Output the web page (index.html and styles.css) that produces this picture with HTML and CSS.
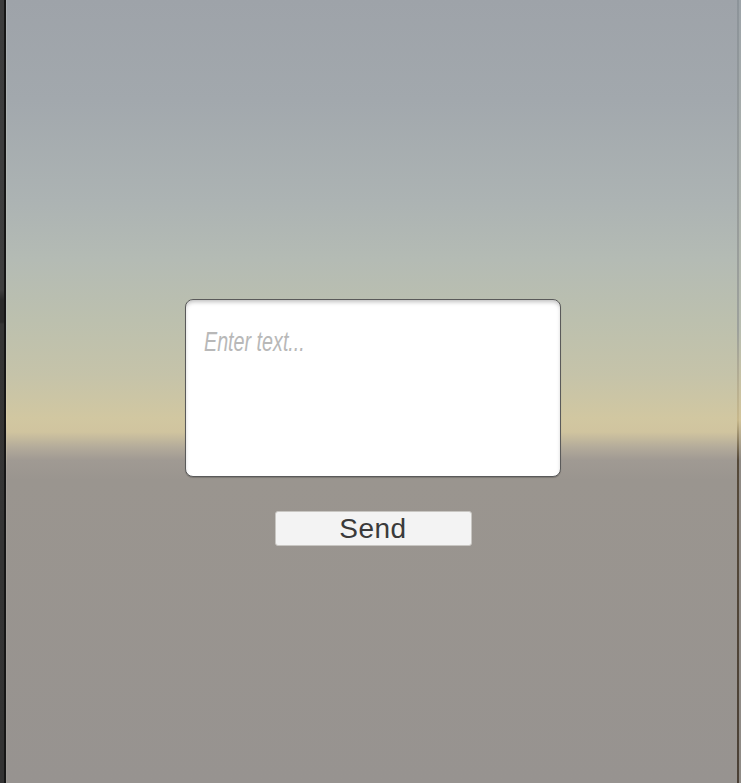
FILE: index.html
```html
<!DOCTYPE html>
<html>
<head>
<meta charset="utf-8">
<link rel="stylesheet" href="styles.css">
</head>
<body>
<div class="frame">
  <div class="side-left"><div class="dark"></div><div class="line"></div><div class="hi"></div></div>
  <main class="scene">
    <div class="textbox"><span class="placeholder">Enter text...</span></div>
    <button class="send">Send</button>
  </main>
  <div class="side-right"><div class="rline"></div><div class="redge"></div></div>
</div>
</body>
</html>
```
FILE: styles.css
```css
html, body { margin: 0; padding: 0; height: 100%; overflow: hidden; }
body { font-family: "Liberation Sans", Arial, sans-serif; }
.frame { display: flex; height: 783px; width: 741px; }
.side-left { display: flex; width: 7px; }
.side-left .dark { width: 4px; background: linear-gradient(to bottom, #3c3c3c 0, #3e3e3e 290px, #2a2a2a 300px, #2a2a2a 322px, #353535 324px, #333 783px); }
.side-left .line { width: 2px; background: #161616; }
.side-left .hi { width: 1px; background: linear-gradient(to bottom, #a9aeb2 0, #bcc2b8 330px, #d8cca6 420px, #a29d97 470px, #9b9894 783px); }
.scene {
  flex: 1;
  display: flex; flex-direction: column; align-items: center;
  padding-top: 299px; padding-left: 2px; box-sizing: border-box;
  background: linear-gradient(to bottom,
    #9ea3a9 0px, #a2a8ad 100px, #acb3b3 200px, #b4bbb4 260px,
    #bcc0ae 320px, #c5c3a9 375px, #d1c7a1 418px, #d0c49f 432px,
    #b2aa9a 448px, #a09a93 460px, #9a958f 480px, #979390 783px);
}
.side-right { display: flex; width: 4px; }
.side-right .rline { width: 2px; background: linear-gradient(to bottom, #8d949a 0, #9da19b 330px, #c7b88c 420px, #55493a 460px, #4a4036 783px); }
.side-right .redge { width: 2px; background: linear-gradient(to bottom, #9ca3a8 0, #b8bdb0 330px, #d2c49a 420px, #8f8a84 460px, #8f8b86 783px); }
.textbox {
  width: 376px; height: 178px; box-sizing: border-box;
  background: #fff;
  border: 1px solid #5a5a5a;
  border-radius: 8px;
  box-shadow: inset 0 3px 4px -1px rgba(0,0,0,0.25), 0 1px 1px rgba(0,0,0,0.2);
  padding: 26px 0 0 18px;
}
.placeholder {
  display: inline-block;
  font-size: 27px; font-style: italic; color: #b8b8b8;
  transform: scaleX(0.73); transform-origin: left center;
  line-height: 32px;
}
.send {
  margin-top: 34px;
  width: 197px; height: 35px;
  background: #f3f3f3;
  border: 1px solid #c8c6c2;
  border-radius: 3px;
  font-family: "Liberation Sans", Arial, sans-serif;
  font-size: 28px; color: #3a3a3a; letter-spacing: 0.5px;
  padding: 0; line-height: 33px;
}
```
